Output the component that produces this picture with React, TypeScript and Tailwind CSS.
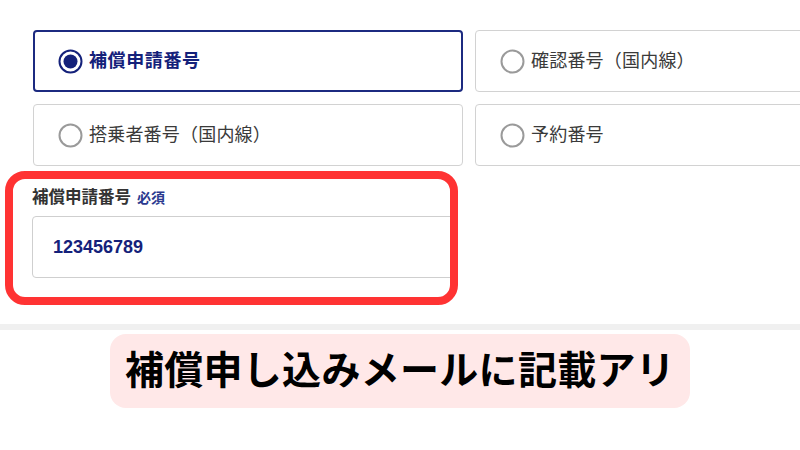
import React from 'react';

const FONT = '"Liberation Sans", "Noto Sans CJK JP", sans-serif';

type Option = { label: string; checked?: boolean };

const OPTIONS: Option[] = [
  { label: '補償申請番号', checked: true },
  { label: '確認番号（国内線）' },
  { label: '搭乗者番号（国内線）' },
  { label: '予約番号' },
];

const Radio: React.FC<{ checked?: boolean }> = ({ checked }) => (
  <svg width="25" height="25" viewBox="0 0 25 25" className="shrink-0">
    <circle
      cx="12.5"
      cy="12.5"
      r="11"
      fill="#fff"
      stroke={checked ? '#14217a' : '#9a9a9a'}
      strokeWidth="2"
    />
    {checked && <circle cx="12.5" cy="12.5" r="7" fill="#14217a" />}
  </svg>
);

const OptionBox: React.FC<{ option: Option }> = ({ option }) => (
  <div
    className={
      option.checked
        ? 'h-[62px] flex items-center pl-[23px] gap-[6px] rounded-[4px] border-2 border-[#1c2a80] bg-white'
        : 'h-[62px] flex items-center pl-[24px] gap-[6px] rounded-[4px] border border-[#d2d2d2] bg-white'
    }
  >
    <Radio checked={option.checked} />
    <span
      className={
        option.checked
          ? 'text-[18px] font-bold text-[#14217a] tracking-[0.6px]'
          : 'text-[18px] text-[#3a3a3a] tracking-[0.2px]'
      }
    >
      {option.label}
    </span>
  </div>
);

const App: React.FC = () => {
  return (
    <div className="relative w-[800px] h-[450px] overflow-hidden bg-white" style={{ fontFamily: FONT }}>
      {/* Radio options */}
      <div className="pt-[30px] pl-[33px]">
        <div className="grid grid-cols-[430px_430px] gap-[12px] w-[872px]">
          {OPTIONS.map(o => (
            <OptionBox key={o.label} option={o} />
          ))}
        </div>
      </div>

      {/* Input field */}
      <div className="pl-[32px] pt-[20px]">
        <div className="flex items-baseline gap-[6px] h-[22px] leading-[22px]">
          <span className="text-[16.5px] font-bold text-[#333]">補償申請番号</span>
          <span className="text-[14px] font-bold text-[#2b3a8f]">必須</span>
        </div>
        <div className="mt-[8px] w-[422px] h-[62px] flex items-center pl-[20px] rounded-[4px] border border-[#cfcfcf] bg-white">
          <span className="text-[18px] font-bold text-[#14217a]">123456789</span>
        </div>
      </div>

      {/* Annotation highlight */}
      <div className="absolute left-[5px] top-[171px] w-[453px] h-[134px] rounded-[20px] border-[8px] border-[#ff3333] pointer-events-none" />

      <div className="mt-[46px] h-[6px] bg-[#f0f0f0]" />

      <div className="mt-[4px] ml-[110px] w-[580px] h-[74px] rounded-[16px] bg-[#ffe8e8] flex items-center justify-center">
        <span className="text-[39px] font-bold text-black tracking-[0.3px]">補償申し込みメールに記載アリ</span>
      </div>
    </div>
  );
};

export default App;
